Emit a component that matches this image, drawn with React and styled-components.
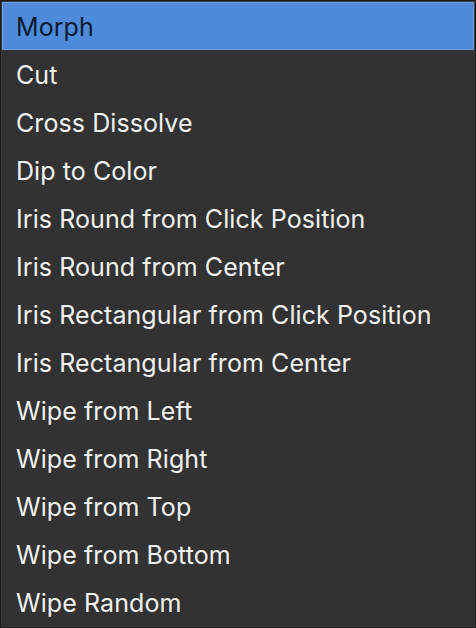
import styled, { createGlobalStyle } from 'styled-components';

const GlobalStyle = createGlobalStyle`
	html, body {
		margin: 0;
		padding: 0;
		background: #1c1c1c;
	}
`;

const items = [
	'Morph',
	'Cut',
	'Cross Dissolve',
	'Dip to Color',
	'Iris Round from Click Position',
	'Iris Round from Center',
	'Iris Rectangular from Click Position',
	'Iris Rectangular from Center',
	'Wipe from Left',
	'Wipe from Right',
	'Wipe from Top',
	'Wipe from Bottom',
	'Wipe Random',
];

const App = () => {
	return (
		<>
			<GlobalStyle />
			<Menu>
				{items.map((label, i) => (
					<Item key={label} $active={i === 0}>
						{label}
					</Item>
				))}
			</Menu>
		</>
	);
};

const Menu = styled.ul`
	box-sizing: border-box;
	width: 476px;
	height: 628px;
	margin: 0;
	padding: 1px;
	list-style: none;
	background: #323232;
	border: 1px solid #1a1a1a;
	box-shadow: inset 0 0 0 1px #3a3a3a;
	display: flex;
	flex-direction: column;
`;

const Item = styled.li`
	box-sizing: border-box;
	height: 48px;
	flex: 0 0 48px;
	display: flex;
	align-items: center;
	padding: 2px 14px 0;
	font-family: Inter, 'Noto Sans', sans-serif;
	font-size: 25px;
	letter-spacing: 0.08px;
	color: ${(p) => (p.$active ? '#0b1a30' : '#f2f2f2')};
	background: ${(p) => (p.$active ? '#4f8bdb' : 'transparent')};
	box-shadow: ${(p) => (p.$active ? 'inset 0 0 0 1px #6a9ee2' : 'none')};
`;

export default App;
